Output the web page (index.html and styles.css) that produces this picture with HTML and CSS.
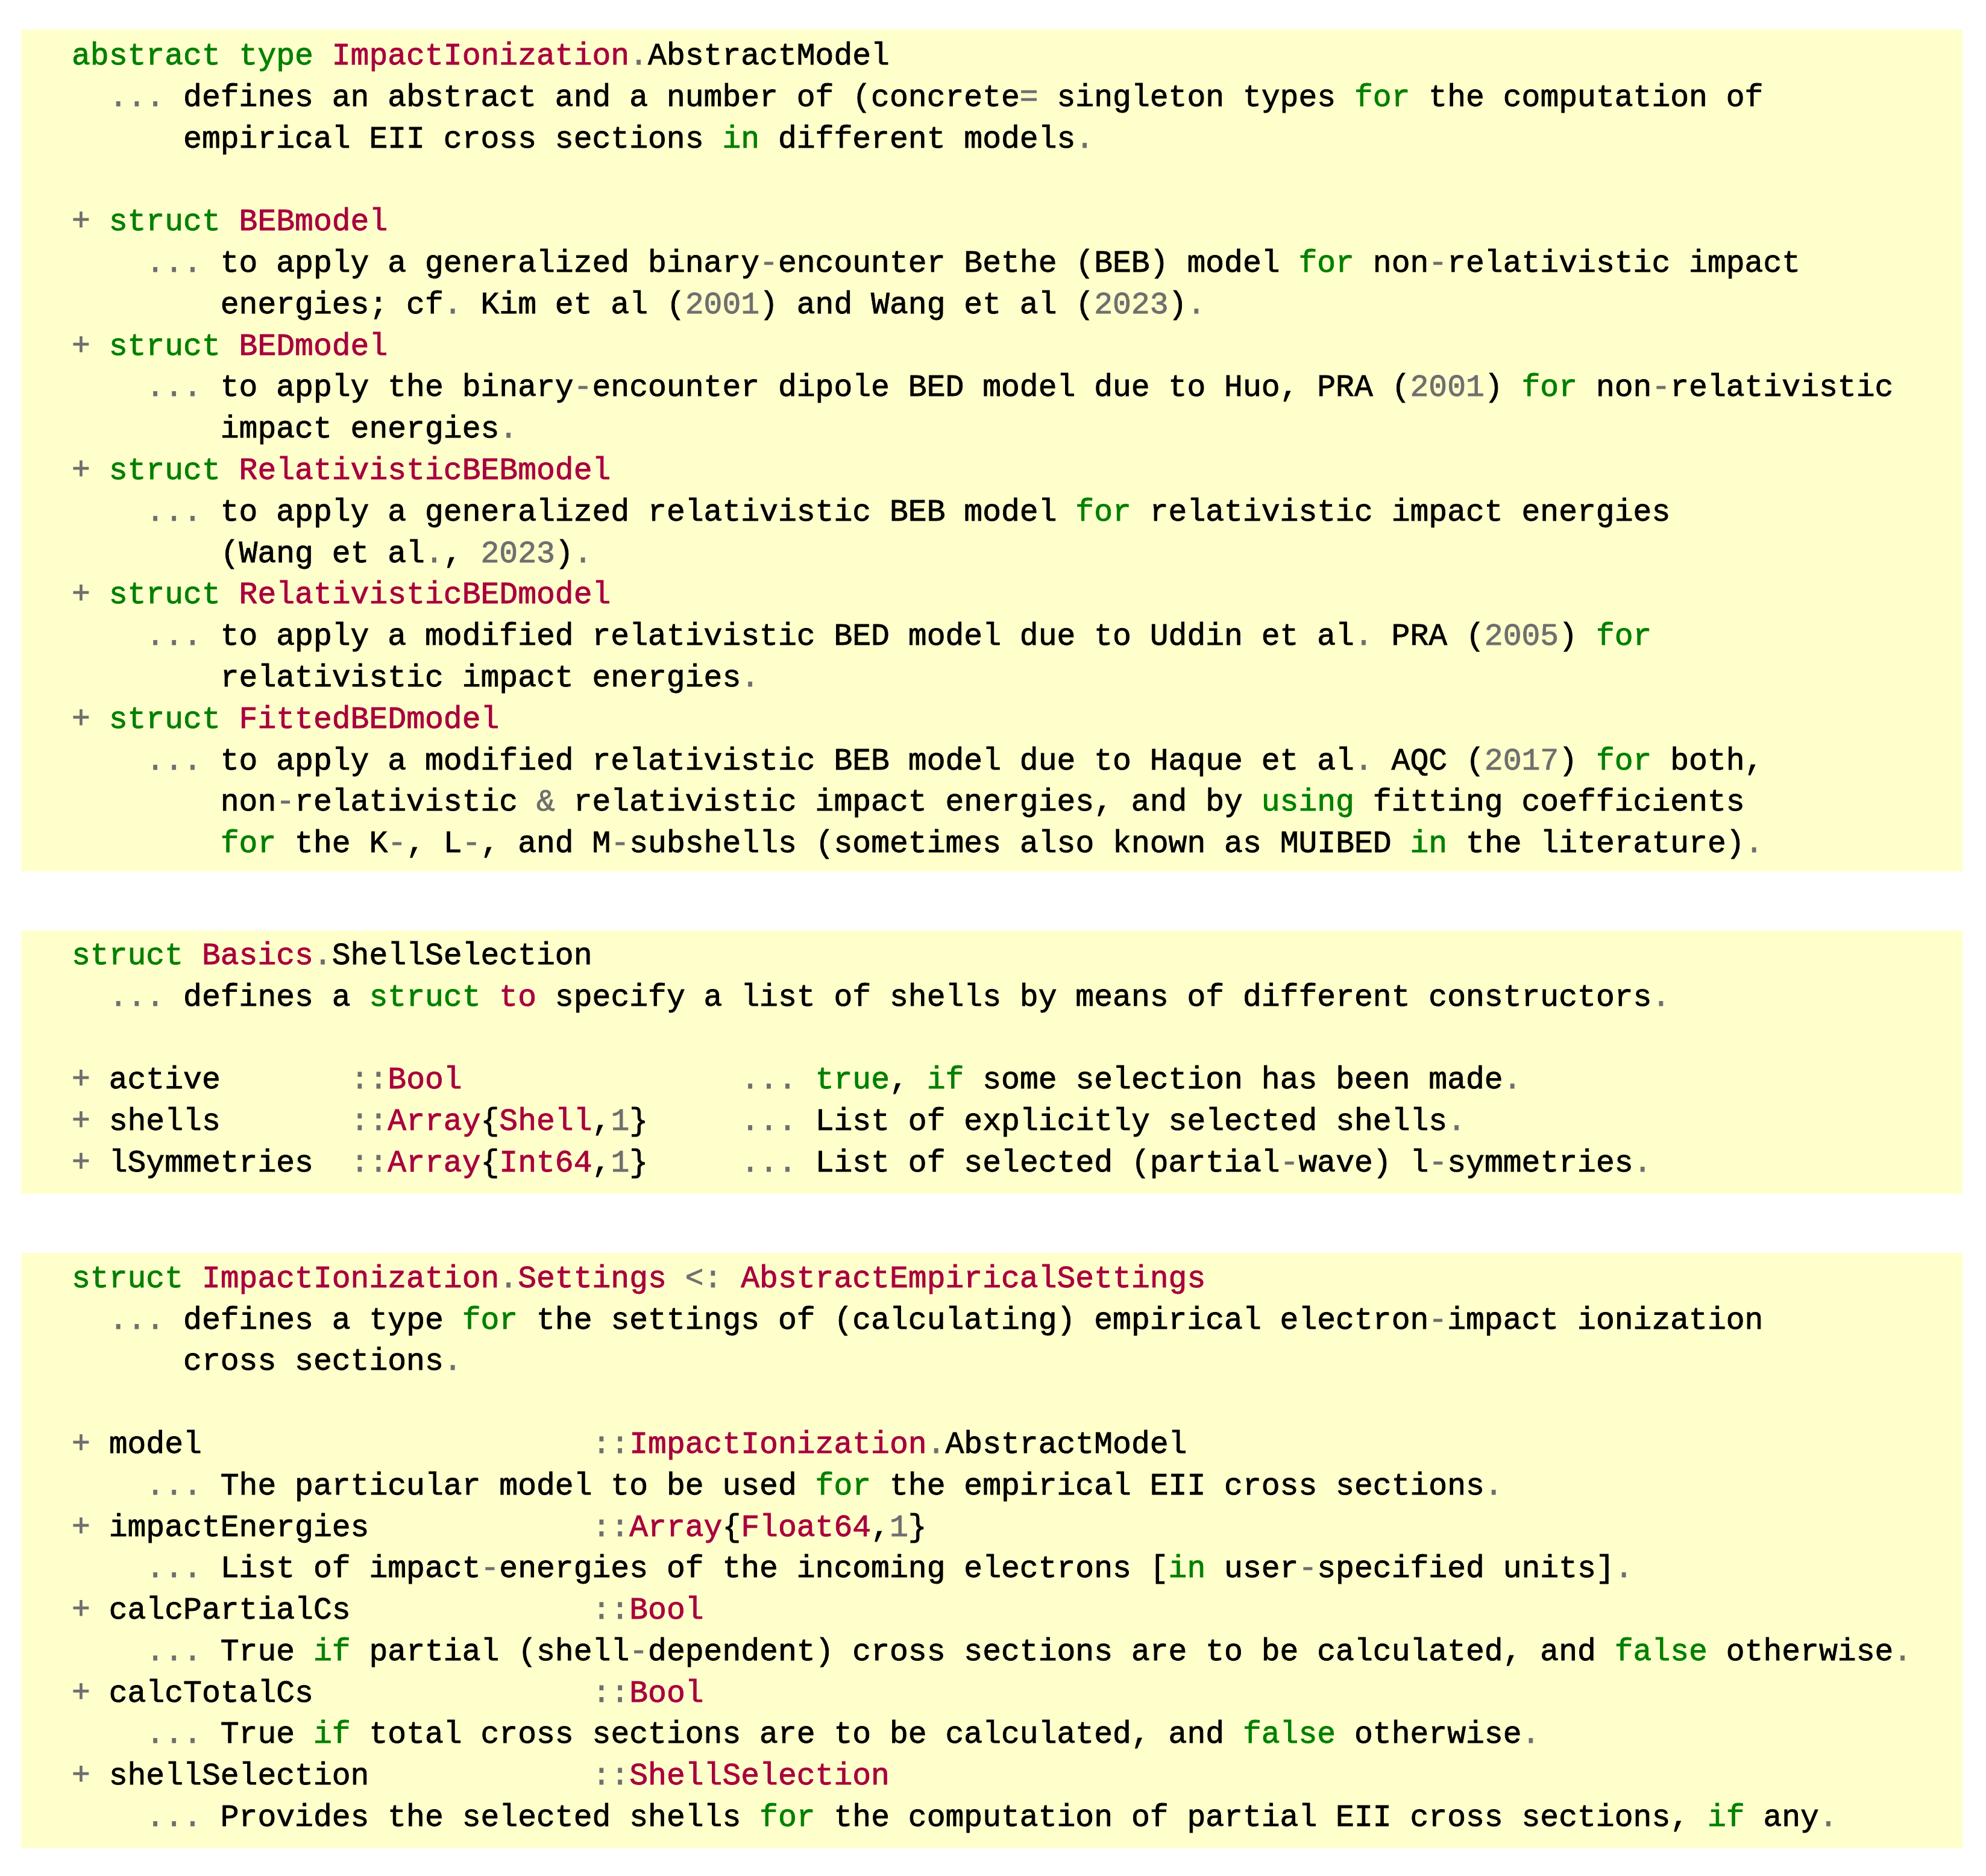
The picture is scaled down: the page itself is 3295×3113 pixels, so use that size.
FILE: index.html
```
<!DOCTYPE html>
<html>
<head>
<meta charset="utf-8">
<link rel="stylesheet" href="styles.css">
</head>
<body>
<div class="page">
<div class="blk b1">
<div class="ln"><span class="k">abstract type</span> <span class="r">ImpactIonization</span><span class="g">.</span>AbstractModel</div>
<div class="ln">  <span class="g">...</span> defines an abstract and a number of (concrete<span class="g">=</span> singleton types <span class="k">for</span> the computation of</div>
<div class="ln">      empirical EII cross sections <span class="k">in</span> different models<span class="g">.</span></div>
<div class="ln"> </div>
<div class="ln"><span class="g">+</span> <span class="k">struct</span> <span class="r">BEBmodel</span></div>
<div class="ln">    <span class="g">...</span> to apply a generalized binary<span class="g">-</span>encounter Bethe (BEB) model <span class="k">for</span> non<span class="g">-</span>relativistic impact</div>
<div class="ln">        energies; cf<span class="g">.</span> Kim et al (<span class="g">2001</span>) and Wang et al (<span class="g">2023</span>)<span class="g">.</span></div>
<div class="ln"><span class="g">+</span> <span class="k">struct</span> <span class="r">BEDmodel</span></div>
<div class="ln">    <span class="g">...</span> to apply the binary<span class="g">-</span>encounter dipole BED model due to Huo, PRA (<span class="g">2001</span>) <span class="k">for</span> non<span class="g">-</span>relativistic</div>
<div class="ln">        impact energies<span class="g">.</span></div>
<div class="ln"><span class="g">+</span> <span class="k">struct</span> <span class="r">RelativisticBEBmodel</span></div>
<div class="ln">    <span class="g">...</span> to apply a generalized relativistic BEB model <span class="k">for</span> relativistic impact energies</div>
<div class="ln">        (Wang et al<span class="g">.</span>, <span class="g">2023</span>)<span class="g">.</span></div>
<div class="ln"><span class="g">+</span> <span class="k">struct</span> <span class="r">RelativisticBEDmodel</span></div>
<div class="ln">    <span class="g">...</span> to apply a modified relativistic BED model due to Uddin et al<span class="g">.</span> PRA (<span class="g">2005</span>) <span class="k">for</span></div>
<div class="ln">        relativistic impact energies<span class="g">.</span></div>
<div class="ln"><span class="g">+</span> <span class="k">struct</span> <span class="r">FittedBEDmodel</span></div>
<div class="ln">    <span class="g">...</span> to apply a modified relativistic BEB model due to Haque et al<span class="g">.</span> AQC (<span class="g">2017</span>) <span class="k">for</span> both,</div>
<div class="ln">        non<span class="g">-</span>relativistic <span class="g">&amp;</span> relativistic impact energies, and by <span class="k">using</span> fitting coefficients</div>
<div class="ln">        <span class="k">for</span> the K<span class="g">-</span>, L<span class="g">-</span>, and M<span class="g">-</span>subshells (sometimes also known as MUIBED <span class="k">in</span> the literature)<span class="g">.</span></div>
</div>

<div class="blk b2">
<div class="ln"><span class="k">struct</span> <span class="r">Basics</span><span class="g">.</span>ShellSelection</div>
<div class="ln">  <span class="g">...</span> defines a <span class="k">struct</span> <span class="r">to</span> specify a list of shells by means of different constructors<span class="g">.</span></div>
<div class="ln"> </div>
<div class="ln"><span class="g">+</span> active       <span class="g">::</span><span class="r">Bool</span>               <span class="g">...</span> <span class="k">true</span>, <span class="k">if</span> some selection has been made<span class="g">.</span></div>
<div class="ln"><span class="g">+</span> shells       <span class="g">::</span><span class="r">Array</span>{<span class="r">Shell</span>,<span class="g">1</span>}     <span class="g">...</span> List of explicitly selected shells<span class="g">.</span></div>
<div class="ln"><span class="g">+</span> lSymmetries  <span class="g">::</span><span class="r">Array</span>{<span class="r">Int64</span>,<span class="g">1</span>}     <span class="g">...</span> List of selected (partial<span class="g">-</span>wave) l<span class="g">-</span>symmetries<span class="g">.</span></div>
</div>

<div class="blk b3">
<div class="ln"><span class="k">struct</span> <span class="r">ImpactIonization</span><span class="g">.</span><span class="r">Settings</span> <span class="g">&lt;:</span> <span class="r">AbstractEmpiricalSettings</span></div>
<div class="ln">  <span class="g">...</span> defines a type <span class="k">for</span> the settings of (calculating) empirical electron<span class="g">-</span>impact ionization</div>
<div class="ln">      cross sections<span class="g">.</span></div>
<div class="ln"> </div>
<div class="ln"><span class="g">+</span> model                     <span class="g">::</span><span class="r">ImpactIonization</span><span class="g">.</span>AbstractModel</div>
<div class="ln">    <span class="g">...</span> The particular model to be used <span class="k">for</span> the empirical EII cross sections<span class="g">.</span></div>
<div class="ln"><span class="g">+</span> impactEnergies            <span class="g">::</span><span class="r">Array</span>{<span class="r">Float64</span>,<span class="g">1</span>}</div>
<div class="ln">    <span class="g">...</span> List of impact<span class="g">-</span>energies of the incoming electrons [<span class="k">in</span> user<span class="g">-</span>specified units]<span class="g">.</span></div>
<div class="ln"><span class="g">+</span> calcPartialCs             <span class="g">::</span><span class="r">Bool</span></div>
<div class="ln">    <span class="g">...</span> True <span class="k">if</span> partial (shell<span class="g">-</span>dependent) cross sections are to be calculated, and <span class="k">false</span> otherwise<span class="g">.</span></div>
<div class="ln"><span class="g">+</span> calcTotalCs               <span class="g">::</span><span class="r">Bool</span></div>
<div class="ln">    <span class="g">...</span> True <span class="k">if</span> total cross sections are to be calculated, and <span class="k">false</span> otherwise<span class="g">.</span></div>
<div class="ln"><span class="g">+</span> shellSelection            <span class="g">::</span><span class="r">ShellSelection</span></div>
<div class="ln">    <span class="g">...</span> Provides the selected shells <span class="k">for</span> the computation of partial EII cross sections, <span class="k">if</span> any<span class="g">.</span></div>
</div>
</div>
</body>
</html>
```
FILE: styles.css
```
html, body {
  margin: 0;
  padding: 0;
  background: #ffffff;
}

.page {
  padding: 49px 39px 45px 35px;
  display: flex;
  flex-direction: column;
  gap: 98px;
}

.blk {
  background: #ffffcc;
  padding-left: 84px;
  font-family: "Liberation Mono", "DejaVu Sans Mono", monospace;
  font-size: 51.4px;
  line-height: 68.8px;
  color: #000000;
  -webkit-text-stroke: 0.9px currentColor;
}

.b1 { padding-top: 10px; padding-bottom: 11px; }
.b2 { padding-top: 8px; padding-bottom: 16px; }
.b3 { padding-top: 9px; padding-bottom: 16px; }

.ln {
  white-space: pre;
  height: 68.8px;
}

.k { color: #008000; }
.r { color: #a8003f; }
.g { color: #6f6f6f; }
```
